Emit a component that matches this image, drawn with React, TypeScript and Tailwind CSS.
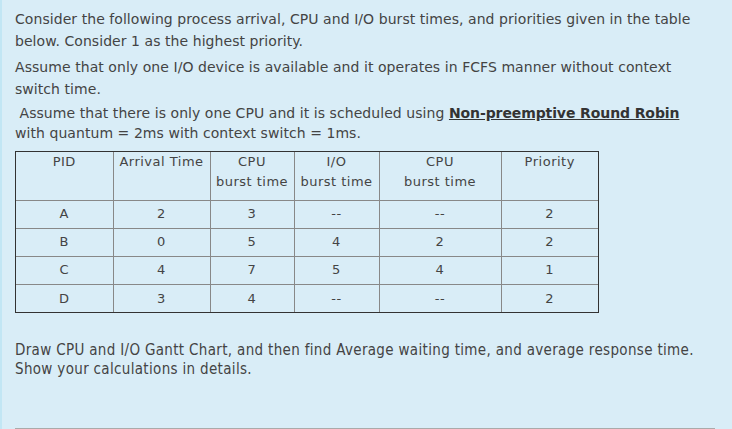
import React from 'react';

const rows = [
  { pid: 'A', arrival: '2', cpu1: '3', io: '--', cpu2: '--', priority: '2' },
  { pid: 'B', arrival: '0', cpu1: '5', io: '4', cpu2: '2', priority: '2' },
  { pid: 'C', arrival: '4', cpu1: '7', io: '5', cpu2: '4', priority: '1' },
  { pid: 'D', arrival: '3', cpu1: '4', io: '--', cpu2: '--', priority: '2' },
];

const App = () => {
  return (
    <div className="w-[732px] h-[429px] overflow-hidden bg-[#d9edf7] border-l-2 border-[#c2e6f4] pl-[13px] pr-4 pt-[8px] text-[14px] tracking-[0.06px] text-[#444] font-['DejaVu_Sans',Verdana,sans-serif]">
      {/* Question text */}
      <p className="leading-[22px] whitespace-nowrap">
        Consider the following process arrival, CPU and I/O burst times, and priorities given in the table
        <br />
        below. Consider 1 as the highest priority.
      </p>
      <p className="leading-[22px] mt-1 whitespace-nowrap">
        Assume that only one I/O device is available and it operates in FCFS manner without context
        <br />
        switch time.
      </p>
      <p className="leading-[20px] mt-[3px] whitespace-nowrap">
        &nbsp;Assume that there is only one CPU and it is scheduled using{' '}
        <span className="font-bold underline text-[#333] tracking-[-0.1px]">Non-preemptive Round Robin</span>
        <br />
        with quantum = 2ms with context switch = 1ms.
      </p>

      {/* Process table */}
      <div className="mt-2 w-[584px] border border-[#333] text-[13px] tracking-[0.5px]">
        <table className="w-full table-fixed border-collapse border-hidden text-center">
          <colgroup>
            <col className="w-[97px]" />
            <col className="w-[97px]" />
            <col className="w-[84px]" />
            <col className="w-[85px]" />
            <col className="w-[122px]" />
            <col className="w-[97px]" />
          </colgroup>
          <thead>
            <tr className="h-[48px] align-top leading-[20px]">
              <th className="border border-[#888] font-normal">PID</th>
              <th className="border border-[#888] font-normal">Arrival Time</th>
              <th className="border border-[#888] font-normal">CPU<br />burst time</th>
              <th className="border border-[#888] font-normal">I/O<br />burst time</th>
              <th className="border border-[#888] font-normal">CPU<br />burst time</th>
              <th className="border border-[#888] font-normal">Priority</th>
            </tr>
          </thead>
          <tbody>
            {rows.map((r) => (
              <tr key={r.pid} className="h-[28px]">
                <td className="border border-[#888]">{r.pid}</td>
                <td className="border border-[#888]">{r.arrival}</td>
                <td className="border border-[#888]">{r.cpu1}</td>
                <td className="border border-[#888]">{r.io}</td>
                <td className="border border-[#888]">{r.cpu2}</td>
                <td className="border border-[#888]">{r.priority}</td>
              </tr>
            ))}
          </tbody>
        </table>
      </div>

      <p className="mt-[28px] text-[15px] tracking-[0.33px] leading-[19px] whitespace-nowrap font-['DejaVu_Sans_Condensed','DejaVu_Sans',sans-serif] [font-stretch:condensed]">
        Draw CPU and I/O Gantt Chart, and then find Average waiting time, and average response time.
        <br />
        Show your calculations in details.
      </p>

      {/* Answer box (cut off) */}
      <div className="mt-[49px] w-[700px] h-[60px] border border-[#aaa] bg-white" />
    </div>
  );
};

export default App;
